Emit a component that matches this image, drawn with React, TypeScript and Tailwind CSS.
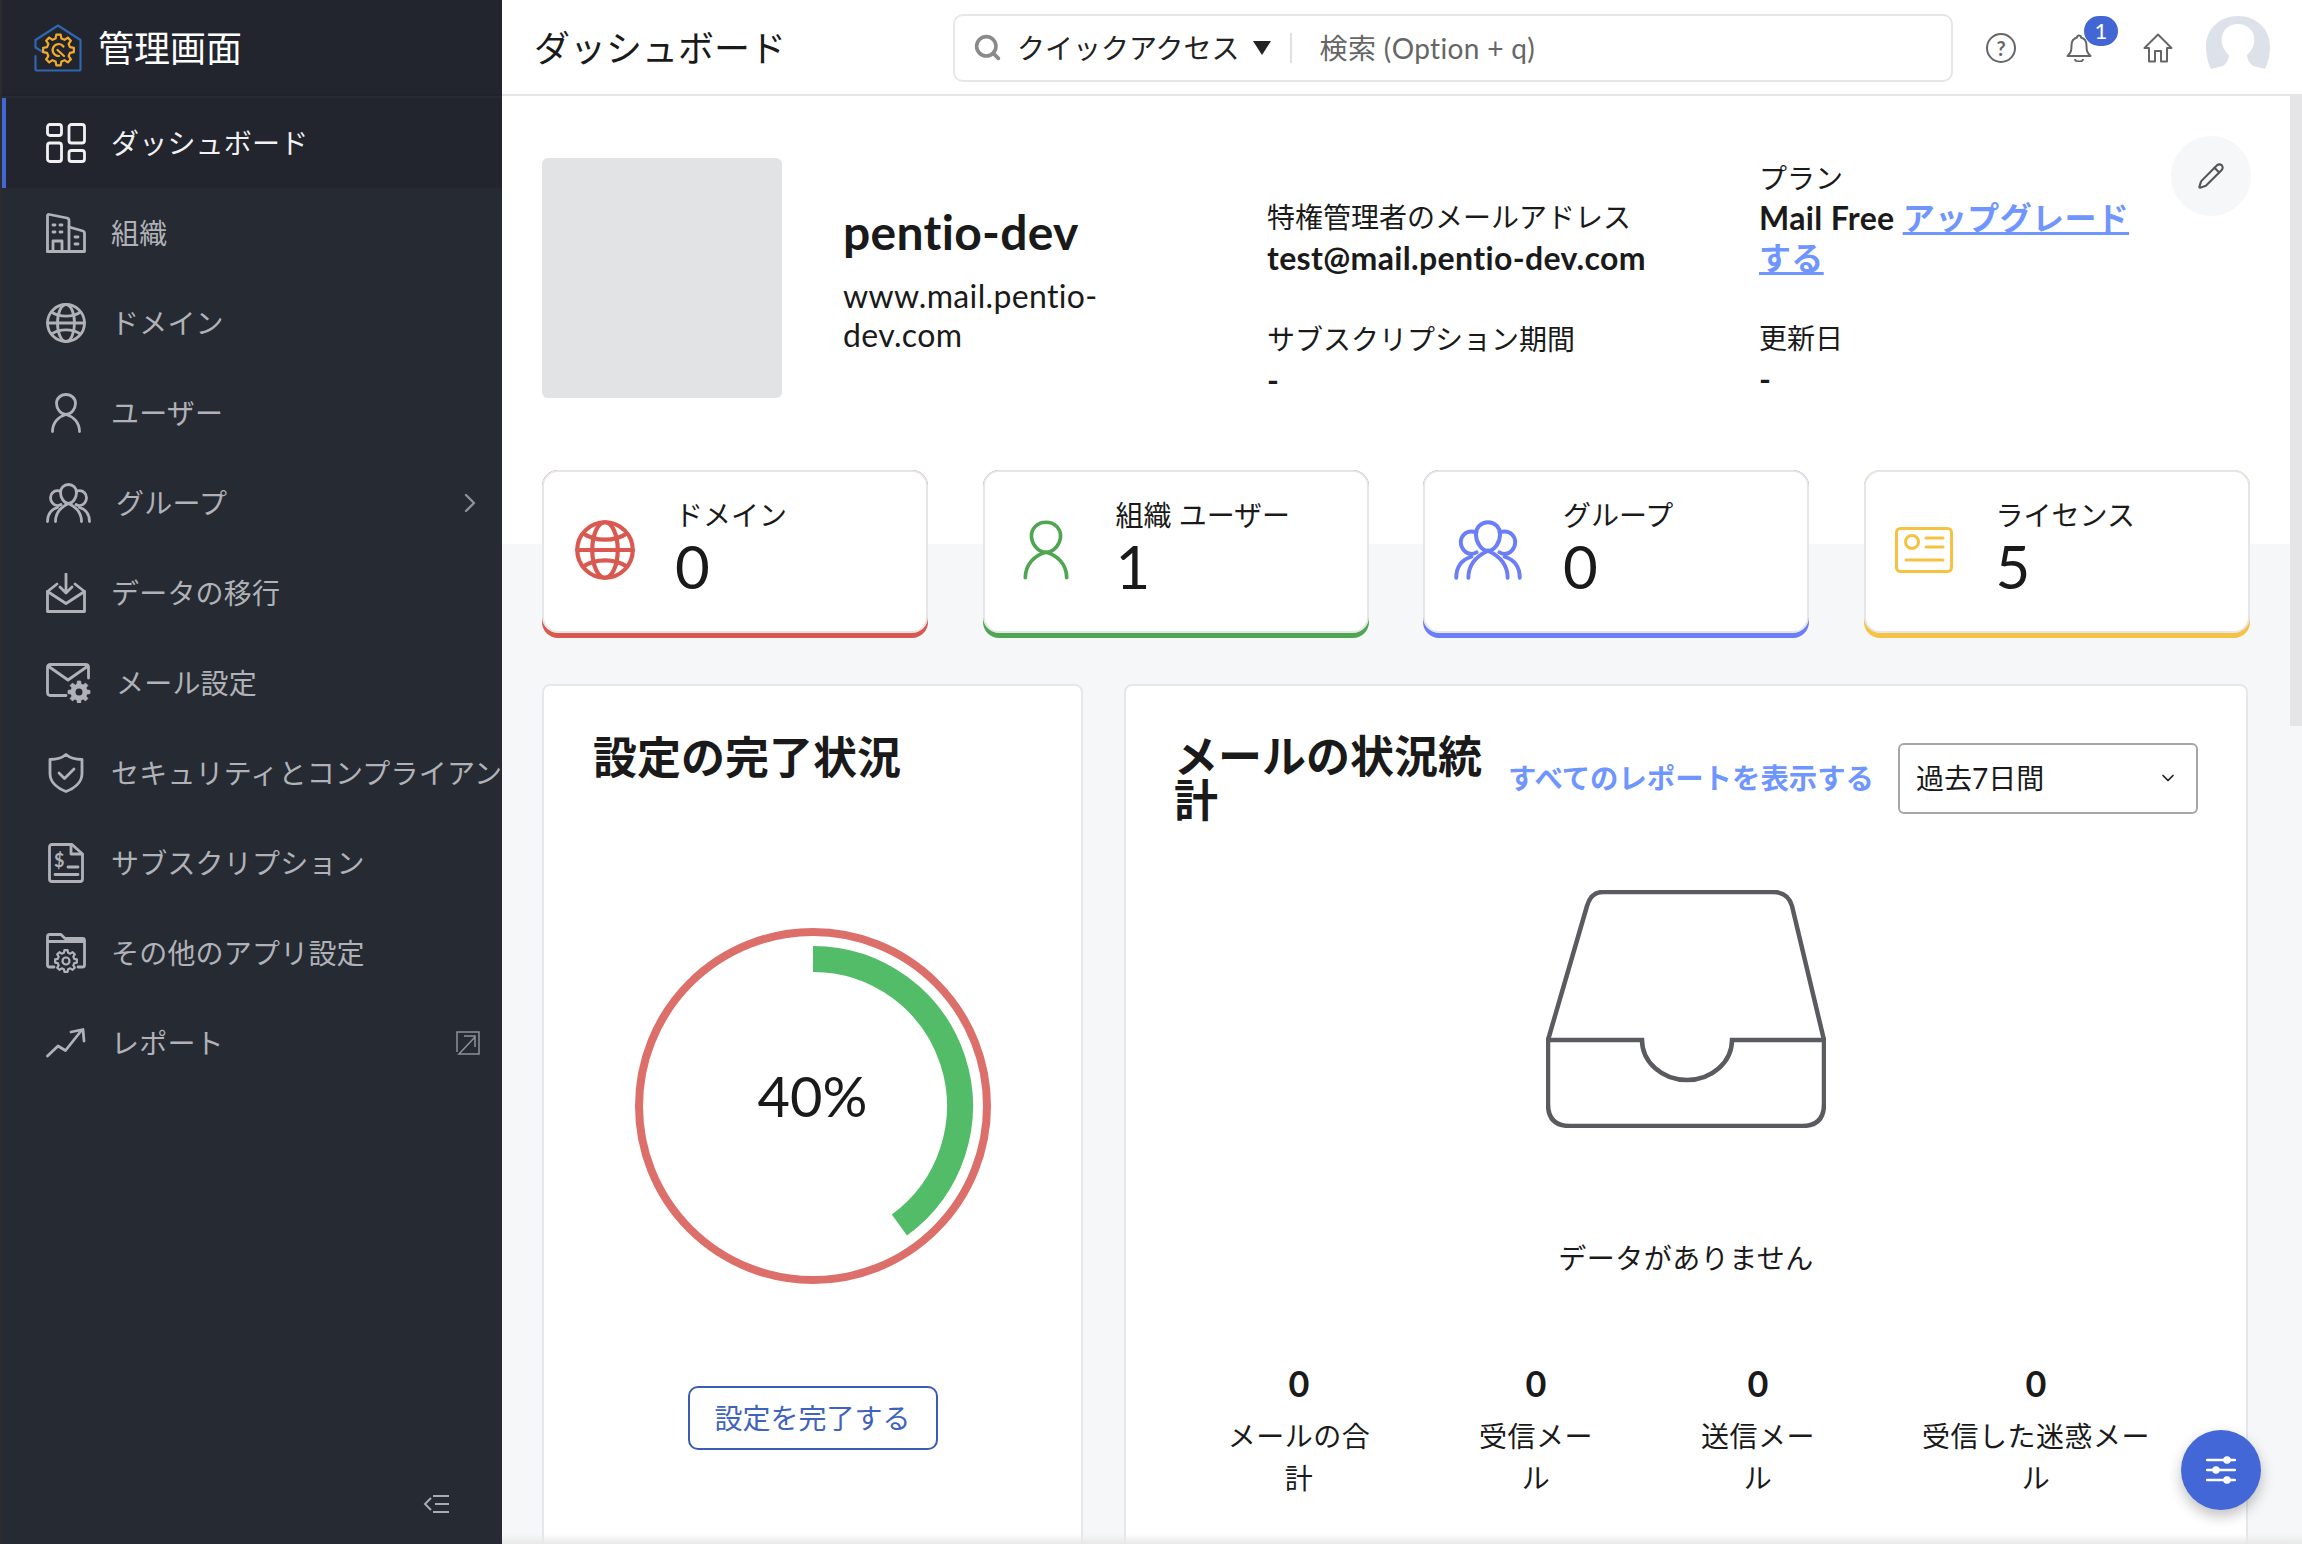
import { ChevronDown, ChevronRight, Pencil, Search } from "lucide-react";
import type { ReactNode } from "react";

const stroke = {
  fill: "none",
  stroke: "currentColor",
  strokeWidth: 2.8,
  strokeLinecap: "round",
  strokeLinejoin: "round",
} as const;

// outline of a cog wheel, used by the logo and the settings icons
const gearPath = (cx: number, cy: number, outer: number, inner: number, teeth: number) => {
  const pts: string[] = [];
  const step = (Math.PI * 2) / teeth;
  for (let i = 0; i < teeth; i++) {
    const a = i * step;
    [
      [inner, a - step * 0.32],
      [outer, a - step * 0.18],
      [outer, a + step * 0.18],
      [inner, a + step * 0.32],
    ].forEach(([r, t]) => pts.push(`${(cx + r * Math.sin(t)).toFixed(2)} ${(cy - r * Math.cos(t)).toFixed(2)}`));
  }
  return `M${pts.join("L")}Z`;
};

const DashboardIcon = () => (
  <svg width="40" height="40" viewBox="0 0 40 40" {...stroke}>
    <rect x="1.500" y="1.500" width="14" height="11" rx="2.500" />
    <rect x="1.500" y="20" width="14" height="18.500" rx="2.500" />
    <rect x="23" y="1.500" width="15.500" height="18.500" rx="2.500" />
    <rect x="23" y="27.500" width="15.500" height="11" rx="2.500" />
  </svg>
);

const OrgIcon = () => (
  <svg width="40" height="40" viewBox="0 0 40 40" {...stroke}>
    <path d="M1.500 38.500V3q0-2 2-1.500L21 5q2 .5 2 2.500v31" />
    <path d="M23 14l14 4q1.500.5 1.500 2v18.500h-37" />
    <path d="M7 12h2M14 12h2M7 19h2M14 19h2M29 24h3M29 31h3" />
    <path d="M7 38v-10h9v10" />
  </svg>
);

const GlobeIcon = ({ size = 40, width = 2.8 }: { size?: number; width?: number }) => (
  <svg width={size} height={size} viewBox="0 0 40 40" {...stroke} strokeWidth={width}>
    <circle cx="20" cy="20" r="18.500" />
    <ellipse cx="20" cy="20" rx="8.500" ry="18.500" />
    <path d="M1.500 20h37M5.500 9c8 5.500 21 5.500 29 0M5.500 31c8-5.500 21-5.500 29 0" />
  </svg>
);

const UserIcon = ({ w = 30, h = 40, width = 2.8 }: { w?: number; h?: number; width?: number }) => (
  <svg width={w} height={h} viewBox="0 0 30 40" {...stroke} strokeWidth={width} preserveAspectRatio="none">
    <path d="M15 1.500c5.500 0 9.500 4 9.500 9 0 5-4 11-9.500 11s-9.500-6-9.500-11c0-5 4-9 9.500-9z" />
    <path d="M1.500 38.500c0-9 6-15 13.500-17 7.500 2 13.500 8 13.500 17" />
  </svg>
);

const GroupIcon = ({ w = 45, h = 40, width = 2.8 }: { w?: number; h?: number; width?: number }) => (
  <svg width={w} height={h} viewBox="0 0 45 40" {...stroke} strokeWidth={width} preserveAspectRatio="none">
    <path d="M22.500 1.500c4.500 0 8 3.500 8 8 0 5-3.500 11-8 11s-8-6-8-11c0-4.500 3.500-8 8-8z" />
    <path d="M14.800 8.500c-1-.5-2-.8-3.300-.8-4 0-7 3-7 7 0 4 3 8 7 8 1.500 0 2.500-.5 3.500-1.200" />
    <path d="M30.200 8.500c1-.5 2-.8 3.300-.8 4 0 7 3 7 7 0 4-3 8-7 8-1.500 0-2.500-.5-3.500-1.200" />
    <path d="M9.500 38.500c0-9 5.500-14.500 13-18 7.500 3.500 13 9 13 18" />
    <path d="M1.500 38.500c0-7 3.500-12 10-14M43.500 38.500c0-7-3.500-12-10-14" />
  </svg>
);

const MigrationIcon = () => (
  <svg width="40" height="40" viewBox="0 0 40 40" {...stroke}>
    <path d="M11 11L1.500 18.500V38.500H38.500V18.500L29 11" />
    <path d="M1.500 18.500L20 30.500L38.500 18.500" />
    <path d="M20 1V19M14 14L20 20L26 14" />
  </svg>
);

const MailGearIcon = () => (
  <svg width="45" height="40" viewBox="0 0 45 40" {...stroke}>
    <path d="M20 32.500H4.500q-3 0-3-3V4.500q0-3 3-3h35q3 0 3 3V15" />
    <path d="M2 3L22 17L42 3" />
    <path d={gearPath(33, 29, 11, 8, 8)} fill="currentColor" strokeWidth="1" />
    <circle cx="33" cy="29" r="3.500" fill="#262a33" stroke="none" />
  </svg>
);

const ShieldIcon = () => (
  <svg width="36" height="40" viewBox="0 0 36 40" {...stroke}>
    <path d="M18 1.500c4 3.500 10 5 16 5v14c0 9-8 15-16 18-8-3-16-9-16-18v-14c6 0 12-1.500 16-5z" />
    <path d="M11 20l5.500 5.500L26 16" />
  </svg>
);

const SubscriptionIcon = () => (
  <svg width="36" height="40" viewBox="0 0 36 40" {...stroke}>
    <path d="M24 1.500H4q-2.500 0-2.500 2.500v32q0 2.500 2.500 2.500h28q2.500 0 2.500-2.500V11L24 1.500z" />
    <path d="M23 2v9h11M20 24h10M7 31.500h23" />
    <text x="6" y="24" fontSize="18" fontWeight="700" fill="currentColor" stroke="none" fontFamily="Lato">$</text>
  </svg>
);

const FolderGearIcon = () => (
  <svg width="40" height="40" viewBox="0 0 40 40" {...stroke}>
    <path d="M8 34H3.500q-2 0-2-2V3.500q0-2 2-2H15l4 4h17.500q2 0 2 2V32q0 2-2 2H32" />
    <path d="M2 8.500H38" />
    <path d={gearPath(20, 28, 11, 8.500, 8)} fill="#262a33" strokeWidth="2.200" />
    <circle cx="20" cy="28" r="3.500" strokeWidth="2.200" />
  </svg>
);

const ReportIcon = () => (
  <svg width="40" height="30" viewBox="0 0 40 30" {...stroke}>
    <path d="M1.500 28L12 18L19.500 22.500L35 3" />
    <path d="M25 4L37 1.500L38 13" />
  </svg>
);

const navItems: { label: string; icon: ReactNode; active?: boolean; right?: ReactNode; rightPos?: string }[] = [
  { label: "ダッシュボード", icon: <DashboardIcon />, active: true },
  { label: "組織", icon: <OrgIcon /> },
  { label: "ドメイン", icon: <GlobeIcon /> },
  { label: "ユーザー", icon: <UserIcon /> },
  {
    label: "グループ",
    icon: <GroupIcon />,
    right: <ChevronRight size={32} strokeWidth={1.800} />,
    rightPos: "right-[16px]",
  },
  { label: "データの移行", icon: <MigrationIcon /> },
  { label: "メール設定", icon: <MailGearIcon /> },
  { label: "セキュリティとコンプライアンス", icon: <ShieldIcon /> },
  { label: "サブスクリプション", icon: <SubscriptionIcon /> },
  { label: "その他のアプリ設定", icon: <FolderGearIcon /> },
  {
    label: "レポート",
    icon: <ReportIcon />,
    right: (
      <svg width="26" height="26" viewBox="0 0 26 26" fill="none" stroke="currentColor" strokeWidth="1.500">
        <path d="M2 22V2H24V24H4L20 7M9 6H20V17" />
      </svg>
    ),
    rightPos: "right-[21px]",
  },
];

const Logo = () => (
  <svg width="48" height="48" viewBox="0 0 48 48" fill="none" strokeLinecap="round" strokeLinejoin="round">
    <path d="M9 28L1.500 23.500V16L24 1.500L46.500 16V45q0 1.500-1.500 1.500H3q-1.500 0-1.500-1.500V32" stroke="#2f66ad" strokeWidth="2.200" />
    <path d={gearPath(24.500, 26, 15.500, 11.800, 8)} stroke="#f0ab2c" strokeWidth="2.200" fill="#22252d" />
    <path d="M29.500 22.500a6 6 0 1 0-4.500 9.500M23.500 26l6.500 6" stroke="#f0ab2c" strokeWidth="2.200" />
  </svg>
);

const Sidebar = () => (
  <aside className="relative flex h-full w-[502px] shrink-0 flex-col overflow-hidden border-l-2 border-[#2c2c2c] bg-[#262a33]">
    <div className="flex h-[96px] shrink-0 items-center gap-[16px] border-b-2 border-[#20232b] bg-[#22252d] pl-[32px] pt-[2px]">
      <Logo />
      <span className="text-[36px] leading-none text-white">管理画面</span>
    </div>
    <nav className="flex flex-col pt-[2px]">
      {navItems.map((item) => (
        <div
          key={item.label}
          className={`relative flex h-[90px] shrink-0 items-center gap-[25px] whitespace-nowrap pl-[44px] text-[28px] tracking-[0.2px] ${
            item.active ? "border-l-4 border-[#4267d5] bg-[#22252d] !pl-[40px] text-[#f1f1f2]" : "text-[#b0b2b7]"
          }`}
        >
          <span className="flex min-w-[40px] justify-center">{item.icon}</span>
          <span>{item.label}</span>
          {item.right && (
            <span className={`absolute top-1/2 -translate-y-1/2 text-[#8f9197] ${item.rightPos}`}>{item.right}</span>
          )}
        </div>
      ))}
    </nav>
    <svg className="absolute bottom-[30px] left-[421px] text-[#a9abb0]" width="26" height="20" viewBox="0 0 26 20" fill="none" stroke="currentColor" strokeWidth="2">
      <path d="M8 4L2 10L8 16M10 2H26M12 10H26M10 18H26" />
    </svg>
  </aside>
);

const TopBar = () => (
  <header className="flex h-[96px] shrink-0 items-center border-b-2 border-[#e6e6e6] bg-white pt-[1px] [font-variant-ligatures:none]">
    <h1 className="w-[451px] pl-[32px] text-[36px] leading-none text-[#1a1a1a]">ダッシュボード</h1>
    <div className="flex h-[68px] w-[1000px] items-center rounded-[10px] border-2 border-[#e6e6e6] pl-[18px]">
      <Search size={29} strokeWidth={3} className="text-[#8a8a8a]" />
      <span className="ml-[15px] text-[28px] text-[#222]">クイックアクセス</span>
      <svg className="ml-[12px]" width="20" height="16" viewBox="0 0 20 16" fill="#222">
        <path d="M1 1H19L10 15Z" />
      </svg>
      <span className="ml-[18px] h-[30px] w-[2px] bg-[#e0e0e0]" />
      <span className="ml-[28px] text-[28px] tracking-[0.35px] text-[#666]">検索 (Option + q)</span>
    </div>
    <div className="relative ml-[33px] flex h-[30px] w-[30px] items-center justify-center rounded-full border-2 border-[#666] text-[20px] font-bold leading-none text-[#666]">
      ?
    </div>
    <div className="relative ml-[50px] text-[#666]">
      <svg className="block" width="26" height="28" viewBox="0 0 26 28" fill="none" stroke="currentColor" strokeWidth="2" strokeLinejoin="round">
        <path d="M13 1.500a2 2 0 0 1 2 2c4 1 5.500 4 5.500 8 0 5 .5 7 4 10.500H1.500c3.500-3.500 4-5.500 4-10.500 0-4 1.500-7 5.500-8a2 2 0 0 1 2-2z" />
        <path d="M9 25a4 2.500 0 0 0 8 0" />
      </svg>
      <span className="absolute left-[18px] top-[-18px] flex h-[30px] w-[34px] items-center justify-center rounded-full bg-[#4267d5] text-[22px] leading-none text-white">
        1
      </span>
    </div>
    <svg className="ml-[51px] text-[#666]" width="30" height="30" viewBox="0 0 30 30" fill="none" stroke="currentColor" strokeWidth="2" strokeLinejoin="round">
      <path d="M15 1.500L1.500 15H6V28.500H12V18H18V28.500H24V15H28.500Z" />
    </svg>
    <svg className="ml-[32px] -mt-[10px]" width="66" height="54" viewBox="0 0 66 54">
      <path
        d="M33 0C15 0 1 13 1 30C1 39 3 47 6 53L18 50C22 47 24 43 24 39C17 33 16 25 17 20C19 12 26 8 33 8C40 8 47 12 49 20C50 25 49 33 42 39C42 43 44 47 48 50L60 53C63 47 65 39 65 30C65 13 51 0 33 0Z"
        fill="#dde1ea"
      />
    </svg>
  </header>
);

const Field = ({ label, value }: { label: string; value: ReactNode }) => (
  <div>
    <div className="text-[28px] leading-[40px] text-[#1a1a1a]">{label}</div>
    <div className="mt-[1px] text-[32px] font-bold leading-[40px] tracking-[0.35px] text-[#1a1a1a]">{value}</div>
  </div>
);

const Profile = () => (
  <section className="flex pt-[62px] pr-[39px]">
    <div className="h-[240px] w-[240px] shrink-0 rounded-[6px] bg-[#e2e3e5]" />
    <div className="ml-[61px] w-[424px] shrink-0 pt-[44px]">
      <div className="text-[48px] font-bold leading-[60px] tracking-[0.3px] text-[#1a1a1a]">pentio-dev</div>
      <div className="mt-[14px] w-[280px] text-[32px] leading-[39px] tracking-[0.35px] text-[#1a1a1a]">www.mail.pentio-dev.com</div>
    </div>
    <div className="w-[492px] shrink-0 pt-[39px]">
      <Field label="特権管理者のメールアドレス" value="test@mail.pentio-dev.com" />
      <div className="mt-[41px]">
        <Field label="サブスクリプション期間" value="-" />
      </div>
    </div>
    <div className="w-[412px] shrink-0">
      <div className="text-[28px] leading-[40px] text-[#1a1a1a]">プラン</div>
      <div className="w-[385px] text-[32px] font-bold leading-[40px] tracking-[0.35px] text-[#1a1a1a]">
        Mail Free <span className="text-[#6f95ff] underline">アップグレードする</span>
      </div>
      <div className="mt-[40px]">
        <Field label="更新日" value="-" />
      </div>
    </div>
    <button className="-mt-[22px] flex h-[80px] w-[80px] shrink-0 items-center justify-center rounded-full bg-[#f6f7f9] text-[#555]">
      <Pencil size={28} strokeWidth={1.800} />
    </button>
  </section>
);

const IdCardIcon = () => (
  <svg width="58" height="46" viewBox="0 0 58 46" fill="none" stroke="#f5c242" strokeWidth="3" strokeLinecap="round">
    <rect x="1.500" y="1.500" width="55" height="43" rx="4" />
    <circle cx="17" cy="15" r="6.500" />
    <path d="M31 11H48M31 20H48M11 33H48" />
  </svg>
);

const statCards = [
  { label: "ドメイン", value: "0", icon: <span className="text-[#d9584f]"><GlobeIcon size={60} width={2.800} /></span>, bar: "bg-[#d9584f]", pad: "pl-[31px]", gap: "gap-[40px]" },
  { label: "組織 ユーザー", value: "1", icon: <span className="text-[#4ea652]"><UserIcon w={46} h={60} width={2.400} /></span>, bar: "bg-[#4ea652]", pad: "pl-[38px]", gap: "gap-[47px]" },
  { label: "グループ", value: "0", icon: <span className="text-[#6b7ef7]"><GroupIcon w={68} h={60} width={2.600} /></span>, bar: "bg-[#6b7ef7]", pad: "pl-[29px]", gap: "gap-[41px]" },
  { label: "ライセンス", value: "5", icon: <IdCardIcon />, bar: "bg-[#f5c242]", pad: "pl-[29px]", gap: "gap-[43px]" },
];

const StatCards = () => (
  <section className="mt-[70px] flex gap-[54.500px]">
    {statCards.map((c) => (
      <div key={c.label} className={`h-[168px] w-[386px] rounded-[16px] ${c.bar}`}>
        <div className={`flex h-[163px] items-center rounded-[16px] border-2 border-[#e6e6e6] bg-white pb-[14px] ${c.pad} ${c.gap}`}>
          <span className="flex shrink-0 pt-[10px]">{c.icon}</span>
          <div className="mt-[6px]">
            <div className="text-[28px] leading-[36px] text-[#1a1a1a]">{c.label}</div>
            <div className="text-[60px] leading-[66px] text-[#1a1a1a]">{c.value}</div>
          </div>
        </div>
      </div>
    ))}
  </section>
);

const Donut = () => (
  <div className="relative mx-auto mt-[149px] h-[356px] w-[356px]">
    <svg width="356" height="356" viewBox="0 0 356 356" fill="none">
      <circle cx="178" cy="178" r="174" stroke="#dd6f6a" strokeWidth="8" />
      <path d="M178 31A147 147 0 0 1 264.400 296.900" stroke="#53bc68" strokeWidth="26" />
    </svg>
    <span className="absolute left-0 right-0 top-[138px] text-center text-[56px] leading-[60px] text-[#1a1a1a]">40%</span>
  </div>
);

const SetupCard = () => (
  <div className="h-[900px] w-[541px] shrink-0 rounded-t-[8px] border-2 border-[#e6e7ea] bg-white">
    <h2 className="pl-[49px] pt-[49px] text-[44px] font-bold leading-[44px] text-[#1a1a1a]">設定の完了状況</h2>
    <Donut />
    <button className="mx-auto mt-[102px] flex h-[64px] w-[250px] items-center justify-center rounded-[10px] border-2 border-[#3b5bb5] text-[28px] text-[#3f62bd]">
      設定を完了する
    </button>
  </div>
);

const stats = [
  { label: "メールの合計", width: "w-[150px]" },
  { label: "受信メール", width: "w-[120px]" },
  { label: "送信メール", width: "w-[120px]" },
  { label: "受信した迷惑メール", width: "w-[232px]" },
];

const MailCard = () => (
  <div className="h-[900px] w-[1124px] shrink-0 rounded-t-[8px] border-2 border-[#e6e7ea] bg-white">
    <div className="flex items-center pl-[48px] pt-[48px]">
      <h2 className="w-[320px] shrink-0 text-[44px] font-bold leading-[44px] text-[#1a1a1a]">メールの状況統計</h2>
      <a className="ml-[14px] whitespace-nowrap text-[28.400px] font-bold text-[#6f95ff]">すべてのレポートを表示する</a>
      <div className="ml-[24px] flex h-[71px] w-[300px] items-center justify-between rounded-[6px] border-2 border-[#a6a6a6] pl-[16px] pr-[18px] text-[28px] text-[#1a1a1a]">
        <span>過去7日間</span>
        <ChevronDown size={20} strokeWidth={2} />
      </div>
    </div>
    <svg className="mx-auto mt-[68px] block" width="280" height="238" viewBox="46 31 280 238" fill="none" stroke="#5a5b60" strokeWidth="4.500">
      <path d="M48 181L87 47Q91 33 103 33H273Q288 33 292 47L324 181" />
      <path d="M48 181H142A45 40 0 0 0 232 181H324V245Q324 267 302 267H70Q48 267 48 245Z" />
    </svg>
    <p className="mt-[110px] text-center text-[28px] leading-[40px] tracking-[0.5px] text-[#1a1a1a]">データがありません</p>
    <div className="mt-[83px] flex gap-[102px] pl-[98px]">
      {stats.map((s) => (
        <div key={s.label} className={`shrink-0 text-center ${s.width}`}>
          <div className="text-[36px] font-bold leading-[44px] text-[#1a1a1a]">0</div>
          <div className="mt-[10px] text-[28px] leading-[42px] tracking-[0.5px] text-[#1a1a1a]">{s.label}</div>
        </div>
      ))}
    </div>
  </div>
);

export default function App() {
  return (
    <div className="flex h-[1544px] w-[2302px] overflow-hidden bg-white font-['Lato','Noto_Sans_CJK_JP',sans-serif]">
      <Sidebar />
      <main className="relative flex min-w-0 flex-1 flex-col">
        <TopBar />
        <div className="flex-1 overflow-hidden bg-[linear-gradient(to_bottom,white_448px,#f6f7f9_448px)] pl-[40px] [font-variant-ligatures:none]">
          <Profile />
          <StatCards />
          <div className="mt-[46px] flex gap-[41px]">
            <SetupCard />
            <MailCard />
          </div>
        </div>
        <div className="absolute right-0 top-[96px] h-[630px] w-[12px] bg-[#e5e5e7]" />
        <div className="absolute bottom-0 left-0 right-0 h-[10px] bg-gradient-to-b from-transparent to-[#e8e8e8]" />
        <button className="absolute bottom-[34px] right-[41px] flex h-[80px] w-[80px] items-center justify-center rounded-full bg-[#4467d8] shadow-[0_6px_14px_rgba(0,0,0,0.25)]">
          <svg width="30" height="28" viewBox="0 0 30 28" fill="none" stroke="white" strokeWidth="2.500" strokeLinecap="round">
            <path d="M1 4H29M1 14H29M1 24H29" />
            <circle cx="21" cy="4" r="2.500" fill="white" />
            <circle cx="10" cy="14" r="2.500" fill="white" />
            <circle cx="21" cy="24" r="2.500" fill="white" />
          </svg>
        </button>
      </main>
    </div>
  );
}
